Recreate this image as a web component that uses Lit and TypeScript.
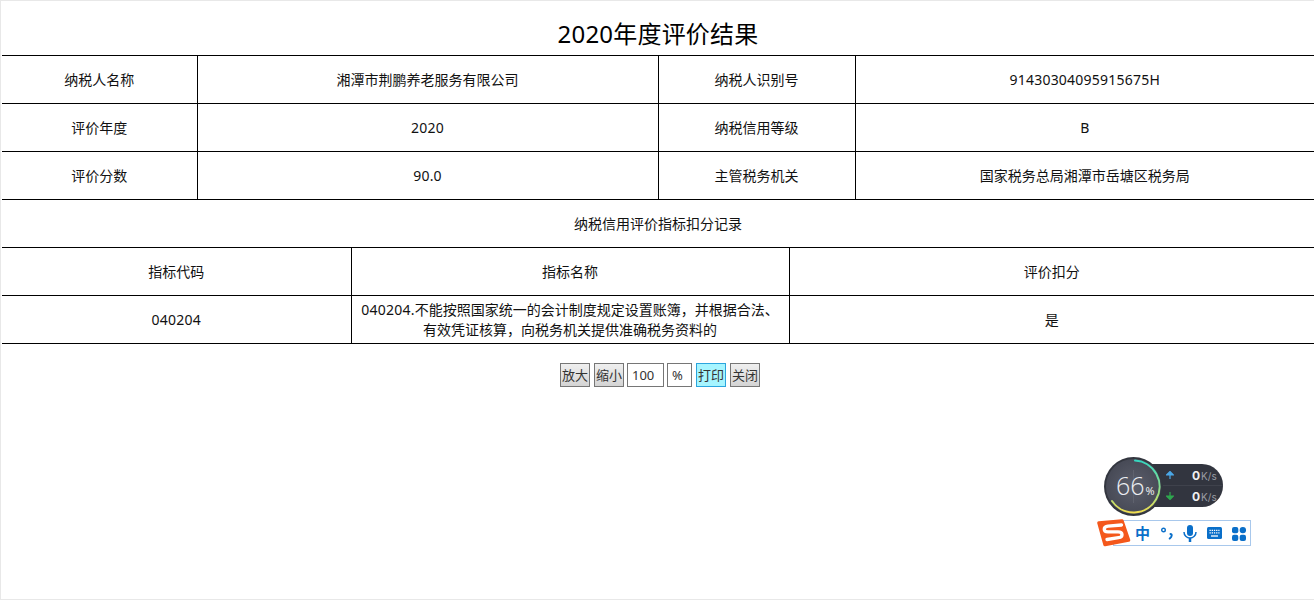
import { LitElement, html, css, svg } from "lit";
import { customElement } from "lit/decorators.js";

const colW = (a: number[]) => html`<colgroup>${a.map((w) => html`<col style="width:${w}px" />`)}</colgroup>`;

@customElement("app-root")
export class AppRoot extends LitElement {
  static styles = css`
    :host {
      display: block;
      position: relative;
      height: 601px;
      box-sizing: border-box;
      overflow: hidden;
      background: #fff;
      color: #000;
      font-family: "Noto Sans", "Noto Sans CJK SC", "Liberation Sans", sans-serif;
      font-size: 14px;
    }
    .frame {
      box-sizing: border-box;
      height: 600px;
      border: 1px solid #e8e8e8;
      border-right: none;
      padding-left: 1px;
    }
    h1 {
      margin: 0;
      height: 54px;
      box-sizing: border-box;
      padding-top: 14px;
      font-weight: 400;
      font-size: 24px;
      line-height: 38px;
      letter-spacing: 0.2px;
      text-align: center;
    }
    table {
      display: table;
      table-layout: fixed;
      border-collapse: collapse;
      width: 1312px;
    }
    td {
      height: 47px;
      padding: 0;
      box-sizing: content-box;
      border-top: 1px solid #000;
      border-left: 1px solid #000;
      text-align: center;
      line-height: 20px;
      color: #111;
    }
    td:first-child { border-left: none; }
    tr:last-child td.end { border-bottom: 1px solid #000; }
    .num { letter-spacing: 0.22px; }
    .name { padding: 0 8px; box-sizing: border-box; height: 48px; }
    .toolbar {
      display: flex;
      justify-content: center;
      align-items: center;
      gap: 4px;
      margin-top: 18px;
      padding-left: 4px;
      height: 25px;
    }
    .btn, .field {
      box-sizing: border-box;
      height: 24px;
      border: 1px solid #767676;
      font: inherit;
      font-size: 13px;
      color: #333;
      padding: 0;
      line-height: 22px;
    }
    .btn {
      width: 30px;
      background: linear-gradient(#efefef, #d4d4d4);
    }
    .btn.primary {
      background: #a6f5ff;
      border-color: #2ba5dd;
    }
    .field {
      background: #fff;
      padding-left: 4px;
      margin-left: -1px;
      text-align: left;
    }
    .f1 { width: 37px; }
    .f2 { width: 25px; }
    .widget {
      position: absolute;
      left: 1097px;
      top: 455px;
      width: 156px;
      height: 95px;
    }
    .net {
      position: absolute;
      left: 50px;
      top: 9px;
      width: 76px;
      height: 43px;
      border-radius: 0 21px 21px 0;
      background: #32353f;
    }
    .net .row {
      position: absolute;
      left: 45px;
      display: flex;
      align-items: baseline;
      gap: 1px;
      font-family: Inter, "Liberation Sans", sans-serif;
      font-size: 12px;
      line-height: 14px;
      font-weight: 700;
      color: #f0f0f0;
    }
    .net .row span { font-weight: 400; font-size: 10px; color: #9a9ca4; }
    .r1 { top: 5px; }
    .r2 { top: 26px; }
    .net .div {
      position: absolute;
      left: 10px;
      right: 0;
      top: 21px;
      height: 1px;
      background: #3f424c;
    }
    .arrow { position: absolute; left: 19px; }
    .gauge { position: absolute; left: 7px; top: 2px; }
    .pct {
      position: absolute;
      left: 19px;
      top: 2px;
      height: 59px;
      display: flex;
      align-items: baseline;
      color: #eceef2;
      font-family: "Open Sans", "Liberation Sans", sans-serif;
      font-weight: 300;
      font-size: 25px;
      line-height: 57px;
    }
    .pct small { font-size: 11px; font-weight: 400; margin-left: 1px; color: #f4f4f4; }
    .ime {
      position: absolute;
      left: 16px;
      top: 65px;
      width: 138px;
      height: 26px;
      box-sizing: border-box;
      border: 1px solid #a8c8ec;
      background: #fff;
    }
    .ime svg { position: absolute; }
    .zh {
      position: absolute;
      left: 21px;
      top: 0;
      font-size: 15px;
      font-weight: 700;
      line-height: 24px;
      color: #0a6fc9;
    }
    .logo { position: absolute; left: 0; top: 64px; }
  `;

  render() {
    const blue = "#0a6fc9";
    return html`
      <div class="frame">
        <h1>2020年度评价结果</h1>
        <table>
          ${colW([195, 461, 197, 459])}
          <tr><td>纳税人名称</td><td>湘潭市荆鹏养老服务有限公司</td><td>纳税人识别号</td><td class="num">91430304095915675H</td></tr>
          <tr><td>评价年度</td><td class="num">2020</td><td>纳税信用等级</td><td>B</td></tr>
          <tr><td>评价分数</td><td class="num">90.0</td><td>主管税务机关</td><td>国家税务总局湘潭市岳塘区税务局</td></tr>
          <tr><td colspan="4">纳税信用评价指标扣分记录</td></tr>
        </table>
        <table>
          ${colW([349, 438, 525])}
          <tr><td>指标代码</td><td>指标名称</td><td>评价扣分</td></tr>
          <tr>
            <td class="end num">040204</td>
            <td class="end name"><span class="num">040204.</span>不能按照国家统一的会计制度规定设置账簿，并根据合法、有效凭证核算，向税务机关提供准确税务资料的</td>
            <td class="end">是</td>
          </tr>
        </table>
        <div class="toolbar">
          <button class="btn">放大</button>
          <button class="btn">缩小</button>
          <div class="field f1">100</div>
          <div class="field f2">%</div>
          <button class="btn primary">打印</button>
          <button class="btn">关闭</button>
        </div>
      </div>

      <div class="widget">
        <div class="net">
          <svg class="arrow" style="top:7px" width="8" height="8" viewBox="0 0 8 8"><path d="M4 8V3M0.5 4 4 0.5 7.500 4Z" fill="#4aa8e8" stroke="#4aa8e8" stroke-width="1.200"/></svg>
          <div class="row r1">0<span>K/s</span></div>
          <div class="div"></div>
          <svg class="arrow" style="top:28px" width="8" height="8" viewBox="0 0 8 8"><path d="M4 0v5M0.5 4 4 7.500 7.500 4Z" fill="#2fa84f" stroke="#2fa84f" stroke-width="1.200"/></svg>
          <div class="row r2">0<span>K/s</span></div>
        </div>
        <svg class="gauge" width="60" height="60" viewBox="0 0 60 60">
          <defs>
            <radialGradient id="g" cx="50%" cy="50%" r="50%">
              <stop offset="0" stop-color="#5c5f6c" />
              <stop offset="1" stop-color="#474a56" />
            </radialGradient>
            <linearGradient id="a" x1="0" y1="0" x2="0" y2="1">
              <stop offset="0" stop-color="#35d6c0" />
              <stop offset="0.55" stop-color="#8fe08a" />
              <stop offset="1" stop-color="#f0dd50" />
            </linearGradient>
          </defs>
          <circle cx="29.500" cy="29.500" r="29.500" fill="#33363f" />
          <circle cx="29.500" cy="29.500" r="27.500" fill="url(#g)" />
          <path d="M29.500 13V46" stroke="#5f626e" stroke-width="1" />
          ${svg`<path d="M31 3.500A26 26 0 1 1 8 44" fill="none" stroke="url(#a)" stroke-width="2" stroke-linecap="round" />`}
        </svg>
        <div class="pct">66<small>%</small></div>

        <div class="ime">
          <span class="zh">中</span>
          <svg style="left:47px;top:6px" width="13" height="13" viewBox="0 0 13 13">
            <circle cx="2.500" cy="3" r="1.800" fill="none" stroke="${blue}" stroke-width="1.400" />
            <path d="M9.500 7c1.600 0 1.800 2.400-.8 4.500" fill="none" stroke="${blue}" stroke-width="2" stroke-linecap="round" />
          </svg>
          <svg style="left:69px;top:4px" width="14" height="17" viewBox="0 0 14 17">
            <rect x="4" y="0" width="6" height="11" rx="3" fill="${blue}" />
            <path d="M1 7a6 6 0 0 0 12 0" fill="none" stroke="${blue}" stroke-width="1.500" />
            <path d="M7 13v4" stroke="${blue}" stroke-width="2.500" />
          </svg>
          <svg style="left:93px;top:6px" width="15" height="12" viewBox="0 0 15 12">
            <rect x="0" y="0" width="15" height="12" rx="1.500" fill="${blue}" />
            <path d="M2.500 3.300h10M2.500 5.800h10" stroke="#fff" stroke-width="1.300" stroke-dasharray="1.300 0.900" />
            <path d="M4 9h7" stroke="#fff" stroke-width="1.300" />
          </svg>
          <svg style="left:118px;top:6px" width="14" height="14" viewBox="0 0 14 14" fill="${blue}">
            <rect x="0" y="0" width="6.300" height="6.300" rx="2" />
            <rect x="7.700" y="0" width="6.300" height="6.300" rx="3" />
            <rect x="0" y="7.700" width="6.300" height="6.300" rx="2" />
            <rect x="7.700" y="7.700" width="6.300" height="6.300" rx="2" />
          </svg>
        </div>
        <svg class="logo" width="34" height="28" viewBox="0 0 34 28">
          <path d="M2 4 25 2 31.500 21 8 25.500Z" fill="#f4581c" stroke="#f4581c" stroke-width="3.500" stroke-linejoin="round" />
          <path d="M24.500 6 11 7.200C6 7.700 6 12.800 11 12.800H21C26 12.800 26.500 18 21.500 18.700L10 20.500" fill="none" stroke="#fff" stroke-width="3.300" stroke-linecap="round" />
        </svg>
      </div>
    `;
  }
}
